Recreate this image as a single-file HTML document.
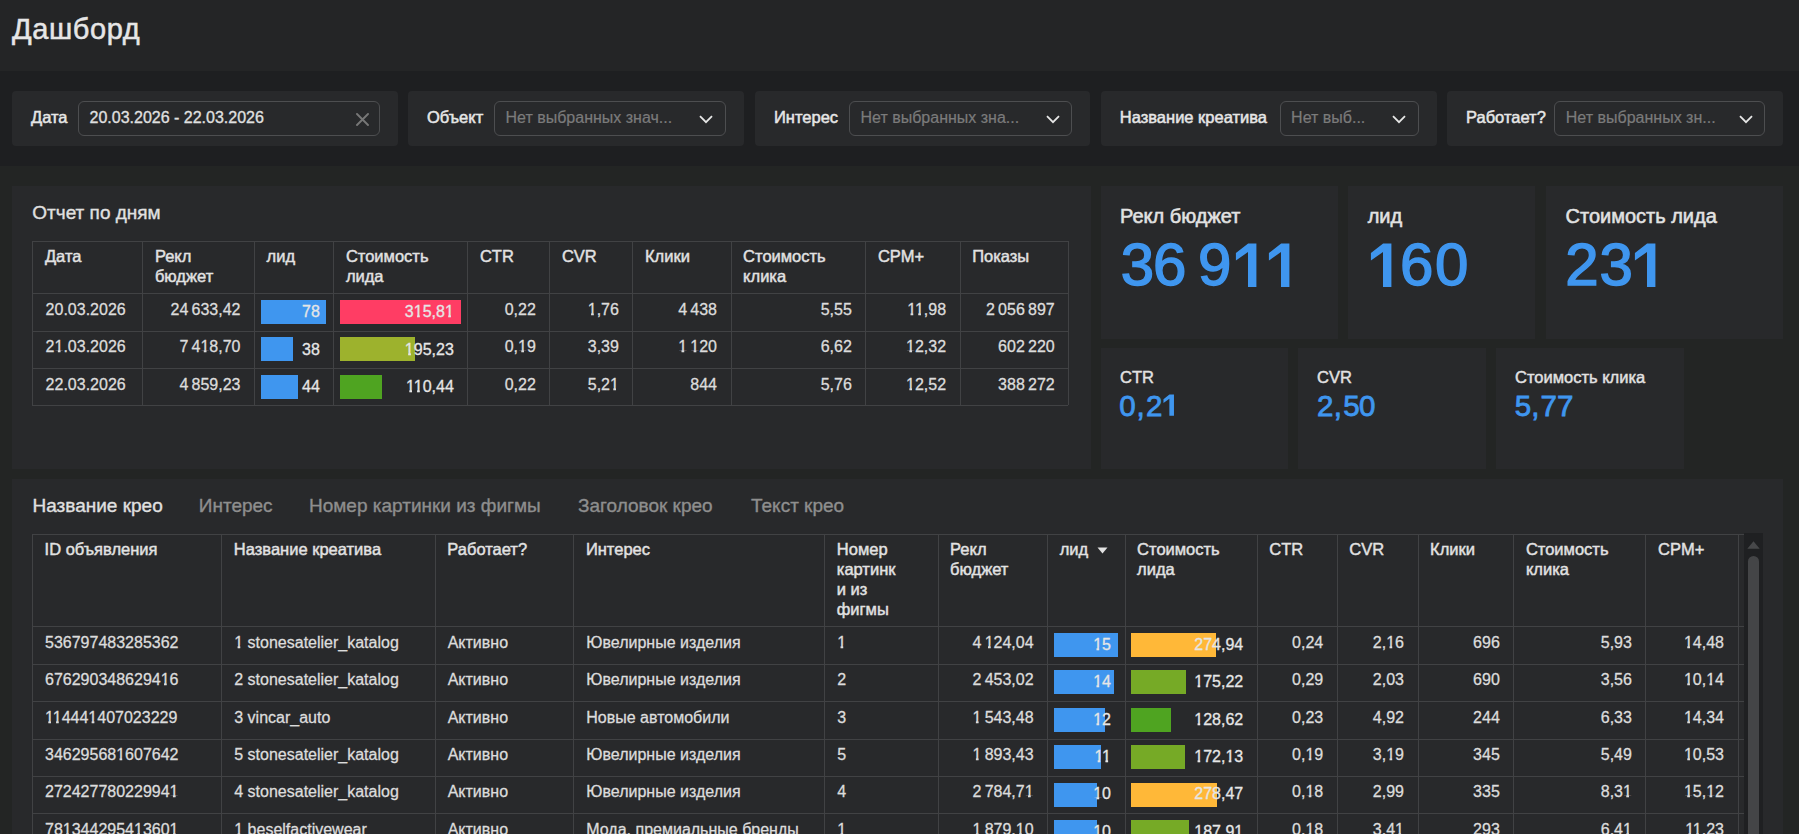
<!DOCTYPE html>
<html><head><meta charset="utf-8"><title>Дашборд</title>
<style>
html,body{margin:0;padding:0;}
html .o{clip-path:polygon(0 0,100% 0,100% 0.74em,0.375em 0.74em,0.375em 100%,0.21em 100%,0.21em 0.74em,0 0.74em);}
body{width:1799px;height:834px;overflow:hidden;position:relative;background:#232524;font-family:"Liberation Sans", sans-serif;}
</style></head><body>
<div style="position:absolute;left:0px;top:0px;width:1799px;height:71px;background:#242526;"></div>
<div style="position:absolute;left:0px;top:71px;width:1799px;height:95px;background:#1e1f21;"></div>
<div style="position:absolute;top:10.93px;font-size:29px;line-height:36.25px;font-weight:400;color:#e6e6e6;white-space:nowrap;letter-spacing:0.6px;left:12px;-webkit-text-stroke:0.5px #e6e6e6;">Дашборд</div>
<div style="position:absolute;left:12px;top:91px;width:385.6px;height:55px;background:#28292b;border-radius:4px;"></div>
<div style="position:absolute;top:107.27px;font-size:16.5px;line-height:20.62px;font-weight:400;color:#e6e6e6;white-space:nowrap;left:31px;-webkit-text-stroke:0.5px #e6e6e6;">Дата</div>
<div style="position:absolute;left:78px;top:101.2px;width:300px;height:32.6px;border:1px solid #4d4e50;border-radius:6px;"></div>
<div style="position:absolute;top:108.16px;font-size:16px;line-height:20.0px;font-weight:400;color:#e0e0e0;white-space:nowrap;left:89.5px;-webkit-text-stroke:0.3px #e0e0e0;">20.03.2026 - 22.03.2026</div>
<svg style="position:absolute;left:355.5px;top:112.5px" width="13" height="13" viewBox="0 0 13 13"><path d="M1 1L12 12M12 1L1 12" stroke="#777" stroke-width="1.9" stroke-linecap="round" fill="none"/></svg>
<div style="position:absolute;left:408.4px;top:91px;width:335.5px;height:55px;background:#28292b;border-radius:4px;"></div>
<div style="position:absolute;top:107.27px;font-size:16.5px;line-height:20.62px;font-weight:400;color:#e6e6e6;white-space:nowrap;left:427px;-webkit-text-stroke:0.5px #e6e6e6;">Объект</div>
<div style="position:absolute;left:494px;top:101.2px;width:229.7px;height:32.6px;border:1px solid #4d4e50;border-radius:6px;"></div>
<div style="position:absolute;top:108.06px;font-size:16px;line-height:20.0px;font-weight:400;color:#7b7b7b;white-space:nowrap;left:505.5px;-webkit-text-stroke:0.2px #7b7b7b;">Нет выбранных знач...</div>
<svg style="position:absolute;left:699.2px;top:114.5px" width="14" height="9" viewBox="0 0 14 9"><path d="M1 1.2L7 7.2L13 1.2" stroke="#e6e6e6" stroke-width="1.8" fill="none"/></svg>
<div style="position:absolute;left:755px;top:91px;width:335px;height:55px;background:#28292b;border-radius:4px;"></div>
<div style="position:absolute;top:107.27px;font-size:16.5px;line-height:20.62px;font-weight:400;color:#e6e6e6;white-space:nowrap;left:774px;-webkit-text-stroke:0.5px #e6e6e6;">Интерес</div>
<div style="position:absolute;left:849px;top:101.2px;width:221px;height:32.6px;border:1px solid #4d4e50;border-radius:6px;"></div>
<div style="position:absolute;top:108.06px;font-size:16px;line-height:20.0px;font-weight:400;color:#7b7b7b;white-space:nowrap;left:860.5px;-webkit-text-stroke:0.2px #7b7b7b;">Нет выбранных зна...</div>
<svg style="position:absolute;left:1045.5px;top:114.5px" width="14" height="9" viewBox="0 0 14 9"><path d="M1 1.2L7 7.2L13 1.2" stroke="#e6e6e6" stroke-width="1.8" fill="none"/></svg>
<div style="position:absolute;left:1101.3px;top:91px;width:335.4px;height:55px;background:#28292b;border-radius:4px;"></div>
<div style="position:absolute;top:107.27px;font-size:16.5px;line-height:20.62px;font-weight:400;color:#e6e6e6;white-space:nowrap;left:1119.8px;-webkit-text-stroke:0.5px #e6e6e6;">Название креатива</div>
<div style="position:absolute;left:1279.6px;top:101.2px;width:137.0px;height:32.6px;border:1px solid #4d4e50;border-radius:6px;"></div>
<div style="position:absolute;top:108.06px;font-size:16px;line-height:20.0px;font-weight:400;color:#7b7b7b;white-space:nowrap;left:1291.1px;-webkit-text-stroke:0.2px #7b7b7b;">Нет выб...</div>
<svg style="position:absolute;left:1392.1px;top:114.5px" width="14" height="9" viewBox="0 0 14 9"><path d="M1 1.2L7 7.2L13 1.2" stroke="#e6e6e6" stroke-width="1.8" fill="none"/></svg>
<div style="position:absolute;left:1447.3px;top:91px;width:335.7px;height:55px;background:#28292b;border-radius:4px;"></div>
<div style="position:absolute;top:107.27px;font-size:16.5px;line-height:20.62px;font-weight:400;color:#e6e6e6;white-space:nowrap;left:1466px;-webkit-text-stroke:0.5px #e6e6e6;">Работает?</div>
<div style="position:absolute;left:1554.3px;top:101.2px;width:208.7px;height:32.6px;border:1px solid #4d4e50;border-radius:6px;"></div>
<div style="position:absolute;top:108.06px;font-size:16px;line-height:20.0px;font-weight:400;color:#7b7b7b;white-space:nowrap;left:1565.8px;-webkit-text-stroke:0.2px #7b7b7b;">Нет выбранных зн...</div>
<svg style="position:absolute;left:1738.5px;top:114.5px" width="14" height="9" viewBox="0 0 14 9"><path d="M1 1.2L7 7.2L13 1.2" stroke="#e6e6e6" stroke-width="1.8" fill="none"/></svg>
<div style="position:absolute;left:12px;top:186px;width:1079.4px;height:282.8px;background:#28292b;"></div>
<div style="position:absolute;top:200.84px;font-size:19px;line-height:23.75px;font-weight:400;color:#e0e0e0;white-space:nowrap;left:32.3px;-webkit-text-stroke:0.35px #e0e0e0;">Отчет по дням</div>
<div style="position:absolute;left:1100.5px;top:185.6px;width:237.8px;height:153.2px;background:#28292b;"></div>
<div style="position:absolute;top:204.37px;font-size:20px;line-height:25.0px;font-weight:400;color:#e2e2e2;white-space:nowrap;left:1120.0px;-webkit-text-stroke:0.55px #e2e2e2;">Рекл бюджет</div>
<div style="position:absolute;left:1348.2px;top:185.6px;width:187.2px;height:153.2px;background:#28292b;"></div>
<div style="position:absolute;top:204.37px;font-size:20px;line-height:25.0px;font-weight:400;color:#e2e2e2;white-space:nowrap;left:1367.7px;-webkit-text-stroke:0.55px #e2e2e2;">лид</div>
<div style="position:absolute;left:1546px;top:185.6px;width:237.3px;height:153.2px;background:#28292b;"></div>
<div style="position:absolute;top:204.37px;font-size:20px;line-height:25.0px;font-weight:400;color:#e2e2e2;white-space:nowrap;left:1565.5px;-webkit-text-stroke:0.55px #e2e2e2;">Стоимость лида</div>
<div style="position:absolute;left:1101px;top:348px;width:187px;height:120.5px;background:#28292b;"></div>
<div style="position:absolute;top:366.97px;font-size:16.5px;line-height:20.62px;font-weight:400;color:#e2e2e2;white-space:nowrap;left:1120px;-webkit-text-stroke:0.45px #e2e2e2;">CTR</div>
<div style="position:absolute;left:1298px;top:348px;width:188px;height:120.5px;background:#28292b;"></div>
<div style="position:absolute;top:366.97px;font-size:16.5px;line-height:20.62px;font-weight:400;color:#e2e2e2;white-space:nowrap;left:1317px;-webkit-text-stroke:0.45px #e2e2e2;">CVR</div>
<div style="position:absolute;left:1496px;top:348px;width:188px;height:120.5px;background:#28292b;"></div>
<div style="position:absolute;top:366.97px;font-size:16.5px;line-height:20.62px;font-weight:400;color:#e2e2e2;white-space:nowrap;left:1515px;-webkit-text-stroke:0.45px #e2e2e2;">Стоимость клика</div>
<div style="position:absolute;left:1120.8px;top:225.3px;font-size:60px;line-height:80px;color:#3f96ef;-webkit-text-stroke:1.5px #3f96ef;">3</div>
<div style="position:absolute;left:1153px;top:225.3px;font-size:60px;line-height:80px;color:#3f96ef;-webkit-text-stroke:1.5px #3f96ef;">6</div>
<div style="position:absolute;left:1198px;top:225.3px;font-size:60px;line-height:80px;color:#3f96ef;-webkit-text-stroke:1.5px #3f96ef;">9</div>
<div style="position:absolute;left:1400.1px;top:225.3px;font-size:60px;line-height:80px;color:#3f96ef;-webkit-text-stroke:1.5px #3f96ef;">6</div>
<div style="position:absolute;left:1434.9px;top:225.3px;font-size:60px;line-height:80px;color:#3f96ef;-webkit-text-stroke:1.5px #3f96ef;">0</div>
<div style="position:absolute;left:1565.2px;top:225.3px;font-size:60px;line-height:80px;color:#3f96ef;-webkit-text-stroke:1.5px #3f96ef;">2</div>
<div style="position:absolute;left:1599.6px;top:225.3px;font-size:60px;line-height:80px;color:#3f96ef;-webkit-text-stroke:1.5px #3f96ef;">3</div>
<svg style="position:absolute;left:1234.9px;top:243.3px" width="37.4" height="45.4"><polygon points="0.91,10.07 13.14,0.5 21.4,0.5 21.4,43.9 13.0,43.9 13.0,8.99 0.91,17.62" fill="#3f96ef"/></svg>
<svg style="position:absolute;left:1267.6px;top:243.3px" width="37.4" height="45.4"><polygon points="0.91,10.07 13.14,0.5 21.4,0.5 21.4,43.9 13.0,43.9 13.0,8.99 0.91,17.62" fill="#3f96ef"/></svg>
<svg style="position:absolute;left:1369.9px;top:243.3px" width="37.4" height="45.4"><polygon points="0.91,10.07 13.14,0.5 21.4,0.5 21.4,43.9 13.0,43.9 13.0,8.99 0.91,17.62" fill="#3f96ef"/></svg>
<svg style="position:absolute;left:1634.4px;top:243.3px" width="37.4" height="45.4"><polygon points="0.91,10.07 13.14,0.5 21.4,0.5 21.4,43.9 13.0,43.9 13.0,8.99 0.91,17.62" fill="#3f96ef"/></svg>
<div style="position:absolute;left:1119.2px;top:385.9px;font-size:29.5px;line-height:40px;color:#3f96ef;-webkit-text-stroke:0.8px #3f96ef;">0</div>
<div style="position:absolute;left:1136.5px;top:385.9px;font-size:29.5px;line-height:40px;color:#3f96ef;-webkit-text-stroke:0.8px #3f96ef;">,</div>
<div style="position:absolute;left:1145.9px;top:385.9px;font-size:29.5px;line-height:40px;color:#3f96ef;-webkit-text-stroke:0.8px #3f96ef;">2</div>
<div style="position:absolute;left:1317px;top:385.9px;font-size:29.5px;line-height:40px;color:#3f96ef;-webkit-text-stroke:0.8px #3f96ef;">2</div>
<div style="position:absolute;left:1333.8px;top:385.9px;font-size:29.5px;line-height:40px;color:#3f96ef;-webkit-text-stroke:0.8px #3f96ef;">,</div>
<div style="position:absolute;left:1343.2px;top:385.9px;font-size:29.5px;line-height:40px;color:#3f96ef;-webkit-text-stroke:0.8px #3f96ef;">5</div>
<div style="position:absolute;left:1359.1px;top:385.9px;font-size:29.5px;line-height:40px;color:#3f96ef;-webkit-text-stroke:0.8px #3f96ef;">0</div>
<div style="position:absolute;left:1514.8px;top:385.9px;font-size:29.5px;line-height:40px;color:#3f96ef;-webkit-text-stroke:0.8px #3f96ef;">5</div>
<div style="position:absolute;left:1531.2px;top:385.9px;font-size:29.5px;line-height:40px;color:#3f96ef;-webkit-text-stroke:0.8px #3f96ef;">,</div>
<div style="position:absolute;left:1540.6px;top:385.9px;font-size:29.5px;line-height:40px;color:#3f96ef;-webkit-text-stroke:0.8px #3f96ef;">7</div>
<div style="position:absolute;left:1557.1px;top:385.9px;font-size:29.5px;line-height:40px;color:#3f96ef;-webkit-text-stroke:0.8px #3f96ef;">7</div>
<svg style="position:absolute;left:1163.23px;top:394.3px" width="19.32" height="23.27"><polygon points="0.45,5.19 6.44,0.5 10.97,0.5 10.97,21.77 6.37,21.77 6.37,4.66 0.45,8.89" fill="#3f96ef"/></svg>
<div style="position:absolute;left:12px;top:478.6px;width:1771.3px;height:400px;background:#28292b;"></div>
<div style="position:absolute;top:493.74px;font-size:19px;line-height:23.75px;font-weight:400;color:#e0e0e0;white-space:nowrap;left:32.5px;-webkit-text-stroke:0.35px #e0e0e0;">Название крео</div>
<div style="position:absolute;top:493.74px;font-size:19px;line-height:23.75px;font-weight:400;color:#8e8e8e;white-space:nowrap;left:198.75px;-webkit-text-stroke:0.35px #8e8e8e;">Интерес</div>
<div style="position:absolute;top:493.74px;font-size:19px;line-height:23.75px;font-weight:400;color:#8e8e8e;white-space:nowrap;left:309px;-webkit-text-stroke:0.35px #8e8e8e;">Номер картинки из фигмы</div>
<div style="position:absolute;top:493.74px;font-size:19px;line-height:23.75px;font-weight:400;color:#8e8e8e;white-space:nowrap;left:578px;-webkit-text-stroke:0.35px #8e8e8e;">Заголовок крео</div>
<div style="position:absolute;top:493.74px;font-size:19px;line-height:23.75px;font-weight:400;color:#8e8e8e;white-space:nowrap;left:751px;-webkit-text-stroke:0.35px #8e8e8e;">Текст крео</div>
<div style="position:absolute;left:32.3px;top:241px;width:1035.9px;height:1px;background:#414244;"></div>
<div style="position:absolute;left:32.3px;top:241px;width:1px;height:164.2px;background:#414244;"></div>
<div style="position:absolute;left:142.3px;top:241px;width:1px;height:164.2px;background:#414244;"></div>
<div style="position:absolute;left:254px;top:241px;width:1px;height:164.2px;background:#414244;"></div>
<div style="position:absolute;left:333.3px;top:241px;width:1px;height:164.2px;background:#414244;"></div>
<div style="position:absolute;left:467.3px;top:241px;width:1px;height:164.2px;background:#414244;"></div>
<div style="position:absolute;left:549.3px;top:241px;width:1px;height:164.2px;background:#414244;"></div>
<div style="position:absolute;left:632.4px;top:241px;width:1px;height:164.2px;background:#414244;"></div>
<div style="position:absolute;left:730.5px;top:241px;width:1px;height:164.2px;background:#414244;"></div>
<div style="position:absolute;left:865.3px;top:241px;width:1px;height:164.2px;background:#414244;"></div>
<div style="position:absolute;left:959.6px;top:241px;width:1px;height:164.2px;background:#414244;"></div>
<div style="position:absolute;left:1068.2px;top:241px;width:1px;height:164.2px;background:#414244;"></div>
<div style="position:absolute;left:32.3px;top:293.3px;width:1035.9px;height:1px;background:#414244;"></div>
<div style="position:absolute;left:32.3px;top:330.6px;width:1035.9px;height:1px;background:#414244;"></div>
<div style="position:absolute;left:32.3px;top:367.9px;width:1035.9px;height:1px;background:#414244;"></div>
<div style="position:absolute;left:32.3px;top:405.2px;width:1035.9px;height:1px;background:#414244;"></div>
<div style="position:absolute;top:245.97px;font-size:16.5px;line-height:20.62px;font-weight:400;color:#e2e2e2;white-space:nowrap;left:44.9px;-webkit-text-stroke:0.45px #e2e2e2;">Дата</div>
<div style="position:absolute;top:245.97px;font-size:16.5px;line-height:20.62px;font-weight:400;color:#e2e2e2;white-space:nowrap;left:154.9px;-webkit-text-stroke:0.45px #e2e2e2;">Рекл</div>
<div style="position:absolute;top:265.77px;font-size:16.5px;line-height:20.62px;font-weight:400;color:#e2e2e2;white-space:nowrap;left:154.9px;-webkit-text-stroke:0.45px #e2e2e2;">бюджет</div>
<div style="position:absolute;top:245.97px;font-size:16.5px;line-height:20.62px;font-weight:400;color:#e2e2e2;white-space:nowrap;left:266.6px;-webkit-text-stroke:0.45px #e2e2e2;">лид</div>
<div style="position:absolute;top:245.97px;font-size:16.5px;line-height:20.62px;font-weight:400;color:#e2e2e2;white-space:nowrap;left:345.90000000000003px;-webkit-text-stroke:0.45px #e2e2e2;">Стоимость</div>
<div style="position:absolute;top:265.77px;font-size:16.5px;line-height:20.62px;font-weight:400;color:#e2e2e2;white-space:nowrap;left:345.90000000000003px;-webkit-text-stroke:0.45px #e2e2e2;">лида</div>
<div style="position:absolute;top:245.97px;font-size:16.5px;line-height:20.62px;font-weight:400;color:#e2e2e2;white-space:nowrap;left:479.90000000000003px;-webkit-text-stroke:0.45px #e2e2e2;">CTR</div>
<div style="position:absolute;top:245.97px;font-size:16.5px;line-height:20.62px;font-weight:400;color:#e2e2e2;white-space:nowrap;left:561.9px;-webkit-text-stroke:0.45px #e2e2e2;">CVR</div>
<div style="position:absolute;top:245.97px;font-size:16.5px;line-height:20.62px;font-weight:400;color:#e2e2e2;white-space:nowrap;left:645.0px;-webkit-text-stroke:0.45px #e2e2e2;">Клики</div>
<div style="position:absolute;top:245.97px;font-size:16.5px;line-height:20.62px;font-weight:400;color:#e2e2e2;white-space:nowrap;left:743.1px;-webkit-text-stroke:0.45px #e2e2e2;">Стоимость</div>
<div style="position:absolute;top:265.77px;font-size:16.5px;line-height:20.62px;font-weight:400;color:#e2e2e2;white-space:nowrap;left:743.1px;-webkit-text-stroke:0.45px #e2e2e2;">клика</div>
<div style="position:absolute;top:245.97px;font-size:16.5px;line-height:20.62px;font-weight:400;color:#e2e2e2;white-space:nowrap;left:877.9px;-webkit-text-stroke:0.45px #e2e2e2;">CPM+</div>
<div style="position:absolute;top:245.97px;font-size:16.5px;line-height:20.62px;font-weight:400;color:#e2e2e2;white-space:nowrap;left:972.2px;-webkit-text-stroke:0.45px #e2e2e2;">Показы</div>
<div style="position:absolute;top:300.06px;font-size:16px;line-height:20.0px;font-weight:400;color:#dcdcdc;white-space:nowrap;left:45.599999999999994px;-webkit-text-stroke:0.3px #dcdcdc;">20.03.2026</div>
<div style="position:absolute;top:300.06px;font-size:16px;line-height:20.0px;font-weight:400;color:#dcdcdc;white-space:nowrap;left:-159.5px;width:400px;text-align:right;-webkit-text-stroke:0.3px #dcdcdc;">24 633,42</div>
<div style="position:absolute;left:260.9px;top:300.0px;width:65.1px;height:24px;background:#3f96ef;"></div>
<div style="position:absolute;top:302.26px;font-size:16px;line-height:20.0px;font-weight:400;color:#e6e6e6;white-space:nowrap;left:-80.2px;width:400px;text-align:right;-webkit-text-stroke:0.3px #e6e6e6;">78</div>
<div style="position:absolute;left:340.2px;top:300.0px;width:120.9px;height:24px;background:#ff3d64;"></div>
<div style="position:absolute;top:302.26px;font-size:16px;line-height:20.0px;font-weight:400;color:#e6e6e6;white-space:nowrap;left:53.8px;width:400px;text-align:right;-webkit-text-stroke:0.3px #e6e6e6;">3<span class="o">1</span>5,8<span class="o">1</span></div>
<div style="position:absolute;top:300.06px;font-size:16px;line-height:20.0px;font-weight:400;color:#dcdcdc;white-space:nowrap;left:135.8px;width:400px;text-align:right;-webkit-text-stroke:0.3px #dcdcdc;">0,22</div>
<div style="position:absolute;top:300.06px;font-size:16px;line-height:20.0px;font-weight:400;color:#dcdcdc;white-space:nowrap;left:218.9px;width:400px;text-align:right;-webkit-text-stroke:0.3px #dcdcdc;"><span class="o">1</span>,76</div>
<div style="position:absolute;top:300.06px;font-size:16px;line-height:20.0px;font-weight:400;color:#dcdcdc;white-space:nowrap;left:317.0px;width:400px;text-align:right;-webkit-text-stroke:0.3px #dcdcdc;">4 438</div>
<div style="position:absolute;top:300.06px;font-size:16px;line-height:20.0px;font-weight:400;color:#dcdcdc;white-space:nowrap;left:451.8px;width:400px;text-align:right;-webkit-text-stroke:0.3px #dcdcdc;">5,55</div>
<div style="position:absolute;top:300.06px;font-size:16px;line-height:20.0px;font-weight:400;color:#dcdcdc;white-space:nowrap;left:546.1px;width:400px;text-align:right;-webkit-text-stroke:0.3px #dcdcdc;"><span class="o">1</span><span class="o">1</span>,98</div>
<div style="position:absolute;top:300.06px;font-size:16px;line-height:20.0px;font-weight:400;color:#dcdcdc;white-space:nowrap;left:654.7px;width:400px;text-align:right;-webkit-text-stroke:0.3px #dcdcdc;">2 056 897</div>
<div style="position:absolute;top:337.36px;font-size:16px;line-height:20.0px;font-weight:400;color:#dcdcdc;white-space:nowrap;left:45.599999999999994px;-webkit-text-stroke:0.3px #dcdcdc;">2<span class="o">1</span>.03.2026</div>
<div style="position:absolute;top:337.36px;font-size:16px;line-height:20.0px;font-weight:400;color:#dcdcdc;white-space:nowrap;left:-159.5px;width:400px;text-align:right;-webkit-text-stroke:0.3px #dcdcdc;">7 4<span class="o">1</span>8,70</div>
<div style="position:absolute;left:260.9px;top:337.3px;width:32.2px;height:24px;background:#3f96ef;"></div>
<div style="position:absolute;top:339.56px;font-size:16px;line-height:20.0px;font-weight:400;color:#e6e6e6;white-space:nowrap;left:-80.2px;width:400px;text-align:right;-webkit-text-stroke:0.3px #e6e6e6;">38</div>
<div style="position:absolute;left:340.2px;top:337.3px;width:74.9px;height:24px;background:#9db22d;"></div>
<div style="position:absolute;top:339.56px;font-size:16px;line-height:20.0px;font-weight:400;color:#e6e6e6;white-space:nowrap;left:53.8px;width:400px;text-align:right;-webkit-text-stroke:0.3px #e6e6e6;"><span class="o">1</span>95,23</div>
<div style="position:absolute;top:337.36px;font-size:16px;line-height:20.0px;font-weight:400;color:#dcdcdc;white-space:nowrap;left:135.8px;width:400px;text-align:right;-webkit-text-stroke:0.3px #dcdcdc;">0,<span class="o">1</span>9</div>
<div style="position:absolute;top:337.36px;font-size:16px;line-height:20.0px;font-weight:400;color:#dcdcdc;white-space:nowrap;left:218.9px;width:400px;text-align:right;-webkit-text-stroke:0.3px #dcdcdc;">3,39</div>
<div style="position:absolute;top:337.36px;font-size:16px;line-height:20.0px;font-weight:400;color:#dcdcdc;white-space:nowrap;left:317.0px;width:400px;text-align:right;-webkit-text-stroke:0.3px #dcdcdc;"><span class="o">1</span> <span class="o">1</span>20</div>
<div style="position:absolute;top:337.36px;font-size:16px;line-height:20.0px;font-weight:400;color:#dcdcdc;white-space:nowrap;left:451.8px;width:400px;text-align:right;-webkit-text-stroke:0.3px #dcdcdc;">6,62</div>
<div style="position:absolute;top:337.36px;font-size:16px;line-height:20.0px;font-weight:400;color:#dcdcdc;white-space:nowrap;left:546.1px;width:400px;text-align:right;-webkit-text-stroke:0.3px #dcdcdc;"><span class="o">1</span>2,32</div>
<div style="position:absolute;top:337.36px;font-size:16px;line-height:20.0px;font-weight:400;color:#dcdcdc;white-space:nowrap;left:654.7px;width:400px;text-align:right;-webkit-text-stroke:0.3px #dcdcdc;">602 220</div>
<div style="position:absolute;top:374.66px;font-size:16px;line-height:20.0px;font-weight:400;color:#dcdcdc;white-space:nowrap;left:45.599999999999994px;-webkit-text-stroke:0.3px #dcdcdc;">22.03.2026</div>
<div style="position:absolute;top:374.66px;font-size:16px;line-height:20.0px;font-weight:400;color:#dcdcdc;white-space:nowrap;left:-159.5px;width:400px;text-align:right;-webkit-text-stroke:0.3px #dcdcdc;">4 859,23</div>
<div style="position:absolute;left:260.9px;top:374.6px;width:37.1px;height:24px;background:#3f96ef;"></div>
<div style="position:absolute;top:376.86px;font-size:16px;line-height:20.0px;font-weight:400;color:#e6e6e6;white-space:nowrap;left:-80.2px;width:400px;text-align:right;-webkit-text-stroke:0.3px #e6e6e6;">44</div>
<div style="position:absolute;left:340.2px;top:374.6px;width:41.8px;height:24px;background:#4fa421;"></div>
<div style="position:absolute;top:376.86px;font-size:16px;line-height:20.0px;font-weight:400;color:#e6e6e6;white-space:nowrap;left:53.8px;width:400px;text-align:right;-webkit-text-stroke:0.3px #e6e6e6;"><span class="o">1</span><span class="o">1</span>0,44</div>
<div style="position:absolute;top:374.66px;font-size:16px;line-height:20.0px;font-weight:400;color:#dcdcdc;white-space:nowrap;left:135.8px;width:400px;text-align:right;-webkit-text-stroke:0.3px #dcdcdc;">0,22</div>
<div style="position:absolute;top:374.66px;font-size:16px;line-height:20.0px;font-weight:400;color:#dcdcdc;white-space:nowrap;left:218.9px;width:400px;text-align:right;-webkit-text-stroke:0.3px #dcdcdc;">5,2<span class="o">1</span></div>
<div style="position:absolute;top:374.66px;font-size:16px;line-height:20.0px;font-weight:400;color:#dcdcdc;white-space:nowrap;left:317.0px;width:400px;text-align:right;-webkit-text-stroke:0.3px #dcdcdc;">844</div>
<div style="position:absolute;top:374.66px;font-size:16px;line-height:20.0px;font-weight:400;color:#dcdcdc;white-space:nowrap;left:451.8px;width:400px;text-align:right;-webkit-text-stroke:0.3px #dcdcdc;">5,76</div>
<div style="position:absolute;top:374.66px;font-size:16px;line-height:20.0px;font-weight:400;color:#dcdcdc;white-space:nowrap;left:546.1px;width:400px;text-align:right;-webkit-text-stroke:0.3px #dcdcdc;"><span class="o">1</span>2,52</div>
<div style="position:absolute;top:374.66px;font-size:16px;line-height:20.0px;font-weight:400;color:#dcdcdc;white-space:nowrap;left:654.7px;width:400px;text-align:right;-webkit-text-stroke:0.3px #dcdcdc;">388 272</div>
<div style="position:absolute;left:32px;top:534.3px;width:1712px;height:1px;background:#414244;"></div>
<div style="position:absolute;left:32px;top:534.3px;width:1px;height:365.7px;background:#414244;"></div>
<div style="position:absolute;left:221.25px;top:534.3px;width:1px;height:365.7px;background:#414244;"></div>
<div style="position:absolute;left:434.7px;top:534.3px;width:1px;height:365.7px;background:#414244;"></div>
<div style="position:absolute;left:573.3px;top:534.3px;width:1px;height:365.7px;background:#414244;"></div>
<div style="position:absolute;left:824.2px;top:534.3px;width:1px;height:365.7px;background:#414244;"></div>
<div style="position:absolute;left:937.5px;top:534.3px;width:1px;height:365.7px;background:#414244;"></div>
<div style="position:absolute;left:1047.1px;top:534.3px;width:1px;height:365.7px;background:#414244;"></div>
<div style="position:absolute;left:1124.5px;top:534.3px;width:1px;height:365.7px;background:#414244;"></div>
<div style="position:absolute;left:1256.7px;top:534.3px;width:1px;height:365.7px;background:#414244;"></div>
<div style="position:absolute;left:1336.7px;top:534.3px;width:1px;height:365.7px;background:#414244;"></div>
<div style="position:absolute;left:1417.5px;top:534.3px;width:1px;height:365.7px;background:#414244;"></div>
<div style="position:absolute;left:1513.3px;top:534.3px;width:1px;height:365.7px;background:#414244;"></div>
<div style="position:absolute;left:1645.4px;top:534.3px;width:1px;height:365.7px;background:#414244;"></div>
<div style="position:absolute;left:1737.5px;top:534.3px;width:1px;height:365.7px;background:#414244;"></div>
<div style="position:absolute;left:32px;top:626.25px;width:1712px;height:1px;background:#414244;"></div>
<div style="position:absolute;left:32px;top:663.68px;width:1712px;height:1px;background:#414244;"></div>
<div style="position:absolute;left:32px;top:701.11px;width:1712px;height:1px;background:#414244;"></div>
<div style="position:absolute;left:32px;top:738.54px;width:1712px;height:1px;background:#414244;"></div>
<div style="position:absolute;left:32px;top:775.97px;width:1712px;height:1px;background:#414244;"></div>
<div style="position:absolute;left:32px;top:813.4px;width:1712px;height:1px;background:#414244;"></div>
<div style="position:absolute;top:538.97px;font-size:16.5px;line-height:20.62px;font-weight:400;color:#e2e2e2;white-space:nowrap;left:44.6px;-webkit-text-stroke:0.45px #e2e2e2;">ID объявления</div>
<div style="position:absolute;top:538.97px;font-size:16.5px;line-height:20.62px;font-weight:400;color:#e2e2e2;white-space:nowrap;left:233.85px;-webkit-text-stroke:0.45px #e2e2e2;">Название креатива</div>
<div style="position:absolute;top:538.97px;font-size:16.5px;line-height:20.62px;font-weight:400;color:#e2e2e2;white-space:nowrap;left:447.3px;-webkit-text-stroke:0.45px #e2e2e2;">Работает?</div>
<div style="position:absolute;top:538.97px;font-size:16.5px;line-height:20.62px;font-weight:400;color:#e2e2e2;white-space:nowrap;left:585.9px;-webkit-text-stroke:0.45px #e2e2e2;">Интерес</div>
<div style="position:absolute;top:538.97px;font-size:16.5px;line-height:20.62px;font-weight:400;color:#e2e2e2;white-space:nowrap;left:836.8000000000001px;-webkit-text-stroke:0.45px #e2e2e2;">Номер</div>
<div style="position:absolute;top:558.97px;font-size:16.5px;line-height:20.62px;font-weight:400;color:#e2e2e2;white-space:nowrap;left:836.8000000000001px;-webkit-text-stroke:0.45px #e2e2e2;">картинк</div>
<div style="position:absolute;top:578.97px;font-size:16.5px;line-height:20.62px;font-weight:400;color:#e2e2e2;white-space:nowrap;left:836.8000000000001px;-webkit-text-stroke:0.45px #e2e2e2;">и из</div>
<div style="position:absolute;top:598.97px;font-size:16.5px;line-height:20.62px;font-weight:400;color:#e2e2e2;white-space:nowrap;left:836.8000000000001px;-webkit-text-stroke:0.45px #e2e2e2;">фигмы</div>
<div style="position:absolute;top:538.97px;font-size:16.5px;line-height:20.62px;font-weight:400;color:#e2e2e2;white-space:nowrap;left:950.1px;-webkit-text-stroke:0.45px #e2e2e2;">Рекл</div>
<div style="position:absolute;top:558.97px;font-size:16.5px;line-height:20.62px;font-weight:400;color:#e2e2e2;white-space:nowrap;left:950.1px;-webkit-text-stroke:0.45px #e2e2e2;">бюджет</div>
<div style="position:absolute;top:538.97px;font-size:16.5px;line-height:20.62px;font-weight:400;color:#e2e2e2;white-space:nowrap;left:1059.6999999999998px;-webkit-text-stroke:0.45px #e2e2e2;">лид</div>
<div style="position:absolute;top:538.97px;font-size:16.5px;line-height:20.62px;font-weight:400;color:#e2e2e2;white-space:nowrap;left:1137.1px;-webkit-text-stroke:0.45px #e2e2e2;">Стоимость</div>
<div style="position:absolute;top:558.97px;font-size:16.5px;line-height:20.62px;font-weight:400;color:#e2e2e2;white-space:nowrap;left:1137.1px;-webkit-text-stroke:0.45px #e2e2e2;">лида</div>
<div style="position:absolute;top:538.97px;font-size:16.5px;line-height:20.62px;font-weight:400;color:#e2e2e2;white-space:nowrap;left:1269.3px;-webkit-text-stroke:0.45px #e2e2e2;">CTR</div>
<div style="position:absolute;top:538.97px;font-size:16.5px;line-height:20.62px;font-weight:400;color:#e2e2e2;white-space:nowrap;left:1349.3px;-webkit-text-stroke:0.45px #e2e2e2;">CVR</div>
<div style="position:absolute;top:538.97px;font-size:16.5px;line-height:20.62px;font-weight:400;color:#e2e2e2;white-space:nowrap;left:1430.1px;-webkit-text-stroke:0.45px #e2e2e2;">Клики</div>
<div style="position:absolute;top:538.97px;font-size:16.5px;line-height:20.62px;font-weight:400;color:#e2e2e2;white-space:nowrap;left:1525.8999999999999px;-webkit-text-stroke:0.45px #e2e2e2;">Стоимость</div>
<div style="position:absolute;top:558.97px;font-size:16.5px;line-height:20.62px;font-weight:400;color:#e2e2e2;white-space:nowrap;left:1525.8999999999999px;-webkit-text-stroke:0.45px #e2e2e2;">клика</div>
<div style="position:absolute;top:538.97px;font-size:16.5px;line-height:20.62px;font-weight:400;color:#e2e2e2;white-space:nowrap;left:1658.0px;-webkit-text-stroke:0.45px #e2e2e2;">CPM+</div>
<svg style="position:absolute;left:1096.8px;top:546.7px" width="11" height="7" viewBox="0 0 11 7"><path d="M0.5 0.5H10.5L5.5 6.5Z" fill="#e2e2e2"/></svg>
<div style="position:absolute;top:632.71px;font-size:16px;line-height:20.0px;font-weight:400;color:#dcdcdc;white-space:nowrap;left:45px;-webkit-text-stroke:0.3px #dcdcdc;">536797483285362</div>
<div style="position:absolute;top:632.71px;font-size:16px;line-height:20.0px;font-weight:400;color:#dcdcdc;white-space:nowrap;left:234.25px;-webkit-text-stroke:0.3px #dcdcdc;"><span class="o">1</span> stonesatelier_katalog</div>
<div style="position:absolute;top:632.71px;font-size:16px;line-height:20.0px;font-weight:400;color:#dcdcdc;white-space:nowrap;left:447.7px;-webkit-text-stroke:0.3px #dcdcdc;">Активно</div>
<div style="position:absolute;top:632.71px;font-size:16px;line-height:20.0px;font-weight:400;color:#dcdcdc;white-space:nowrap;left:586.3px;-webkit-text-stroke:0.3px #dcdcdc;">Ювелирные изделия</div>
<div style="position:absolute;top:632.71px;font-size:16px;line-height:20.0px;font-weight:400;color:#dcdcdc;white-space:nowrap;left:837.2px;-webkit-text-stroke:0.3px #dcdcdc;"><span class="o">1</span></div>
<div style="position:absolute;top:632.71px;font-size:16px;line-height:20.0px;font-weight:400;color:#dcdcdc;white-space:nowrap;left:633.6px;width:400px;text-align:right;-webkit-text-stroke:0.3px #dcdcdc;">4 <span class="o">1</span>24,04</div>
<div style="position:absolute;left:1054.0px;top:633.0px;width:63.6px;height:24px;background:#3f96ef;"></div>
<div style="position:absolute;top:634.71px;font-size:16px;line-height:20.0px;font-weight:400;color:#e6e6e6;white-space:nowrap;left:711.0px;width:400px;text-align:right;-webkit-text-stroke:0.3px #e6e6e6;"><span class="o">1</span>5</div>
<div style="position:absolute;left:1130.9px;top:633.0px;width:85.1px;height:24px;background:#ffb838;"></div>
<div style="position:absolute;top:634.71px;font-size:16px;line-height:20.0px;font-weight:400;color:#e6e6e6;white-space:nowrap;left:843.2px;width:400px;text-align:right;-webkit-text-stroke:0.3px #e6e6e6;">274,94</div>
<div style="position:absolute;top:632.71px;font-size:16px;line-height:20.0px;font-weight:400;color:#dcdcdc;white-space:nowrap;left:923.2px;width:400px;text-align:right;-webkit-text-stroke:0.3px #dcdcdc;">0,24</div>
<div style="position:absolute;top:632.71px;font-size:16px;line-height:20.0px;font-weight:400;color:#dcdcdc;white-space:nowrap;left:1004.0px;width:400px;text-align:right;-webkit-text-stroke:0.3px #dcdcdc;">2,<span class="o">1</span>6</div>
<div style="position:absolute;top:632.71px;font-size:16px;line-height:20.0px;font-weight:400;color:#dcdcdc;white-space:nowrap;left:1099.8px;width:400px;text-align:right;-webkit-text-stroke:0.3px #dcdcdc;">696</div>
<div style="position:absolute;top:632.71px;font-size:16px;line-height:20.0px;font-weight:400;color:#dcdcdc;white-space:nowrap;left:1231.9px;width:400px;text-align:right;-webkit-text-stroke:0.3px #dcdcdc;">5,93</div>
<div style="position:absolute;top:632.71px;font-size:16px;line-height:20.0px;font-weight:400;color:#dcdcdc;white-space:nowrap;left:1324.0px;width:400px;text-align:right;-webkit-text-stroke:0.3px #dcdcdc;"><span class="o">1</span>4,48</div>
<div style="position:absolute;top:670.14px;font-size:16px;line-height:20.0px;font-weight:400;color:#dcdcdc;white-space:nowrap;left:45px;-webkit-text-stroke:0.3px #dcdcdc;">6762903486294<span class="o">1</span>6</div>
<div style="position:absolute;top:670.14px;font-size:16px;line-height:20.0px;font-weight:400;color:#dcdcdc;white-space:nowrap;left:234.25px;-webkit-text-stroke:0.3px #dcdcdc;">2 stonesatelier_katalog</div>
<div style="position:absolute;top:670.14px;font-size:16px;line-height:20.0px;font-weight:400;color:#dcdcdc;white-space:nowrap;left:447.7px;-webkit-text-stroke:0.3px #dcdcdc;">Активно</div>
<div style="position:absolute;top:670.14px;font-size:16px;line-height:20.0px;font-weight:400;color:#dcdcdc;white-space:nowrap;left:586.3px;-webkit-text-stroke:0.3px #dcdcdc;">Ювелирные изделия</div>
<div style="position:absolute;top:670.14px;font-size:16px;line-height:20.0px;font-weight:400;color:#dcdcdc;white-space:nowrap;left:837.2px;-webkit-text-stroke:0.3px #dcdcdc;">2</div>
<div style="position:absolute;top:670.14px;font-size:16px;line-height:20.0px;font-weight:400;color:#dcdcdc;white-space:nowrap;left:633.6px;width:400px;text-align:right;-webkit-text-stroke:0.3px #dcdcdc;">2 453,02</div>
<div style="position:absolute;left:1054.0px;top:670.43px;width:60px;height:24px;background:#3f96ef;"></div>
<div style="position:absolute;top:672.14px;font-size:16px;line-height:20.0px;font-weight:400;color:#e6e6e6;white-space:nowrap;left:711.0px;width:400px;text-align:right;-webkit-text-stroke:0.3px #e6e6e6;"><span class="o">1</span>4</div>
<div style="position:absolute;left:1130.9px;top:670.43px;width:55.1px;height:24px;background:#76aa26;"></div>
<div style="position:absolute;top:672.14px;font-size:16px;line-height:20.0px;font-weight:400;color:#e6e6e6;white-space:nowrap;left:843.2px;width:400px;text-align:right;-webkit-text-stroke:0.3px #e6e6e6;"><span class="o">1</span>75,22</div>
<div style="position:absolute;top:670.14px;font-size:16px;line-height:20.0px;font-weight:400;color:#dcdcdc;white-space:nowrap;left:923.2px;width:400px;text-align:right;-webkit-text-stroke:0.3px #dcdcdc;">0,29</div>
<div style="position:absolute;top:670.14px;font-size:16px;line-height:20.0px;font-weight:400;color:#dcdcdc;white-space:nowrap;left:1004.0px;width:400px;text-align:right;-webkit-text-stroke:0.3px #dcdcdc;">2,03</div>
<div style="position:absolute;top:670.14px;font-size:16px;line-height:20.0px;font-weight:400;color:#dcdcdc;white-space:nowrap;left:1099.8px;width:400px;text-align:right;-webkit-text-stroke:0.3px #dcdcdc;">690</div>
<div style="position:absolute;top:670.14px;font-size:16px;line-height:20.0px;font-weight:400;color:#dcdcdc;white-space:nowrap;left:1231.9px;width:400px;text-align:right;-webkit-text-stroke:0.3px #dcdcdc;">3,56</div>
<div style="position:absolute;top:670.14px;font-size:16px;line-height:20.0px;font-weight:400;color:#dcdcdc;white-space:nowrap;left:1324.0px;width:400px;text-align:right;-webkit-text-stroke:0.3px #dcdcdc;"><span class="o">1</span>0,<span class="o">1</span>4</div>
<div style="position:absolute;top:707.57px;font-size:16px;line-height:20.0px;font-weight:400;color:#dcdcdc;white-space:nowrap;left:45px;-webkit-text-stroke:0.3px #dcdcdc;"><span class="o">1</span><span class="o">1</span>444<span class="o">1</span>407023229</div>
<div style="position:absolute;top:707.57px;font-size:16px;line-height:20.0px;font-weight:400;color:#dcdcdc;white-space:nowrap;left:234.25px;-webkit-text-stroke:0.3px #dcdcdc;">3 vincar_auto</div>
<div style="position:absolute;top:707.57px;font-size:16px;line-height:20.0px;font-weight:400;color:#dcdcdc;white-space:nowrap;left:447.7px;-webkit-text-stroke:0.3px #dcdcdc;">Активно</div>
<div style="position:absolute;top:707.57px;font-size:16px;line-height:20.0px;font-weight:400;color:#dcdcdc;white-space:nowrap;left:586.3px;-webkit-text-stroke:0.3px #dcdcdc;">Новые автомобили</div>
<div style="position:absolute;top:707.57px;font-size:16px;line-height:20.0px;font-weight:400;color:#dcdcdc;white-space:nowrap;left:837.2px;-webkit-text-stroke:0.3px #dcdcdc;">3</div>
<div style="position:absolute;top:707.57px;font-size:16px;line-height:20.0px;font-weight:400;color:#dcdcdc;white-space:nowrap;left:633.6px;width:400px;text-align:right;-webkit-text-stroke:0.3px #dcdcdc;"><span class="o">1</span> 543,48</div>
<div style="position:absolute;left:1054.0px;top:707.86px;width:51px;height:24px;background:#3f96ef;"></div>
<div style="position:absolute;top:709.57px;font-size:16px;line-height:20.0px;font-weight:400;color:#e6e6e6;white-space:nowrap;left:711.0px;width:400px;text-align:right;-webkit-text-stroke:0.3px #e6e6e6;"><span class="o">1</span>2</div>
<div style="position:absolute;left:1130.9px;top:707.86px;width:40.1px;height:24px;background:#4fa421;"></div>
<div style="position:absolute;top:709.57px;font-size:16px;line-height:20.0px;font-weight:400;color:#e6e6e6;white-space:nowrap;left:843.2px;width:400px;text-align:right;-webkit-text-stroke:0.3px #e6e6e6;"><span class="o">1</span>28,62</div>
<div style="position:absolute;top:707.57px;font-size:16px;line-height:20.0px;font-weight:400;color:#dcdcdc;white-space:nowrap;left:923.2px;width:400px;text-align:right;-webkit-text-stroke:0.3px #dcdcdc;">0,23</div>
<div style="position:absolute;top:707.57px;font-size:16px;line-height:20.0px;font-weight:400;color:#dcdcdc;white-space:nowrap;left:1004.0px;width:400px;text-align:right;-webkit-text-stroke:0.3px #dcdcdc;">4,92</div>
<div style="position:absolute;top:707.57px;font-size:16px;line-height:20.0px;font-weight:400;color:#dcdcdc;white-space:nowrap;left:1099.8px;width:400px;text-align:right;-webkit-text-stroke:0.3px #dcdcdc;">244</div>
<div style="position:absolute;top:707.57px;font-size:16px;line-height:20.0px;font-weight:400;color:#dcdcdc;white-space:nowrap;left:1231.9px;width:400px;text-align:right;-webkit-text-stroke:0.3px #dcdcdc;">6,33</div>
<div style="position:absolute;top:707.57px;font-size:16px;line-height:20.0px;font-weight:400;color:#dcdcdc;white-space:nowrap;left:1324.0px;width:400px;text-align:right;-webkit-text-stroke:0.3px #dcdcdc;"><span class="o">1</span>4,34</div>
<div style="position:absolute;top:745.0px;font-size:16px;line-height:20.0px;font-weight:400;color:#dcdcdc;white-space:nowrap;left:45px;-webkit-text-stroke:0.3px #dcdcdc;">34629568<span class="o">1</span>607642</div>
<div style="position:absolute;top:745.0px;font-size:16px;line-height:20.0px;font-weight:400;color:#dcdcdc;white-space:nowrap;left:234.25px;-webkit-text-stroke:0.3px #dcdcdc;">5 stonesatelier_katalog</div>
<div style="position:absolute;top:745.0px;font-size:16px;line-height:20.0px;font-weight:400;color:#dcdcdc;white-space:nowrap;left:447.7px;-webkit-text-stroke:0.3px #dcdcdc;">Активно</div>
<div style="position:absolute;top:745.0px;font-size:16px;line-height:20.0px;font-weight:400;color:#dcdcdc;white-space:nowrap;left:586.3px;-webkit-text-stroke:0.3px #dcdcdc;">Ювелирные изделия</div>
<div style="position:absolute;top:745.0px;font-size:16px;line-height:20.0px;font-weight:400;color:#dcdcdc;white-space:nowrap;left:837.2px;-webkit-text-stroke:0.3px #dcdcdc;">5</div>
<div style="position:absolute;top:745.0px;font-size:16px;line-height:20.0px;font-weight:400;color:#dcdcdc;white-space:nowrap;left:633.6px;width:400px;text-align:right;-webkit-text-stroke:0.3px #dcdcdc;"><span class="o">1</span> 893,43</div>
<div style="position:absolute;left:1054.0px;top:745.29px;width:46.9px;height:24px;background:#3f96ef;"></div>
<div style="position:absolute;top:747.0px;font-size:16px;line-height:20.0px;font-weight:400;color:#e6e6e6;white-space:nowrap;left:711.0px;width:400px;text-align:right;-webkit-text-stroke:0.3px #e6e6e6;"><span class="o">1</span><span class="o">1</span></div>
<div style="position:absolute;left:1130.9px;top:745.29px;width:54.1px;height:24px;background:#76aa26;"></div>
<div style="position:absolute;top:747.0px;font-size:16px;line-height:20.0px;font-weight:400;color:#e6e6e6;white-space:nowrap;left:843.2px;width:400px;text-align:right;-webkit-text-stroke:0.3px #e6e6e6;"><span class="o">1</span>72,<span class="o">1</span>3</div>
<div style="position:absolute;top:745.0px;font-size:16px;line-height:20.0px;font-weight:400;color:#dcdcdc;white-space:nowrap;left:923.2px;width:400px;text-align:right;-webkit-text-stroke:0.3px #dcdcdc;">0,<span class="o">1</span>9</div>
<div style="position:absolute;top:745.0px;font-size:16px;line-height:20.0px;font-weight:400;color:#dcdcdc;white-space:nowrap;left:1004.0px;width:400px;text-align:right;-webkit-text-stroke:0.3px #dcdcdc;">3,<span class="o">1</span>9</div>
<div style="position:absolute;top:745.0px;font-size:16px;line-height:20.0px;font-weight:400;color:#dcdcdc;white-space:nowrap;left:1099.8px;width:400px;text-align:right;-webkit-text-stroke:0.3px #dcdcdc;">345</div>
<div style="position:absolute;top:745.0px;font-size:16px;line-height:20.0px;font-weight:400;color:#dcdcdc;white-space:nowrap;left:1231.9px;width:400px;text-align:right;-webkit-text-stroke:0.3px #dcdcdc;">5,49</div>
<div style="position:absolute;top:745.0px;font-size:16px;line-height:20.0px;font-weight:400;color:#dcdcdc;white-space:nowrap;left:1324.0px;width:400px;text-align:right;-webkit-text-stroke:0.3px #dcdcdc;"><span class="o">1</span>0,53</div>
<div style="position:absolute;top:782.43px;font-size:16px;line-height:20.0px;font-weight:400;color:#dcdcdc;white-space:nowrap;left:45px;-webkit-text-stroke:0.3px #dcdcdc;">27242778022994<span class="o">1</span></div>
<div style="position:absolute;top:782.43px;font-size:16px;line-height:20.0px;font-weight:400;color:#dcdcdc;white-space:nowrap;left:234.25px;-webkit-text-stroke:0.3px #dcdcdc;">4 stonesatelier_katalog</div>
<div style="position:absolute;top:782.43px;font-size:16px;line-height:20.0px;font-weight:400;color:#dcdcdc;white-space:nowrap;left:447.7px;-webkit-text-stroke:0.3px #dcdcdc;">Активно</div>
<div style="position:absolute;top:782.43px;font-size:16px;line-height:20.0px;font-weight:400;color:#dcdcdc;white-space:nowrap;left:586.3px;-webkit-text-stroke:0.3px #dcdcdc;">Ювелирные изделия</div>
<div style="position:absolute;top:782.43px;font-size:16px;line-height:20.0px;font-weight:400;color:#dcdcdc;white-space:nowrap;left:837.2px;-webkit-text-stroke:0.3px #dcdcdc;">4</div>
<div style="position:absolute;top:782.43px;font-size:16px;line-height:20.0px;font-weight:400;color:#dcdcdc;white-space:nowrap;left:633.6px;width:400px;text-align:right;-webkit-text-stroke:0.3px #dcdcdc;">2 784,7<span class="o">1</span></div>
<div style="position:absolute;left:1054.0px;top:782.72px;width:42.9px;height:24px;background:#3f96ef;"></div>
<div style="position:absolute;top:784.43px;font-size:16px;line-height:20.0px;font-weight:400;color:#e6e6e6;white-space:nowrap;left:711.0px;width:400px;text-align:right;-webkit-text-stroke:0.3px #e6e6e6;"><span class="o">1</span>0</div>
<div style="position:absolute;left:1130.9px;top:782.72px;width:86.1px;height:24px;background:#ffb838;"></div>
<div style="position:absolute;top:784.43px;font-size:16px;line-height:20.0px;font-weight:400;color:#e6e6e6;white-space:nowrap;left:843.2px;width:400px;text-align:right;-webkit-text-stroke:0.3px #e6e6e6;">278,47</div>
<div style="position:absolute;top:782.43px;font-size:16px;line-height:20.0px;font-weight:400;color:#dcdcdc;white-space:nowrap;left:923.2px;width:400px;text-align:right;-webkit-text-stroke:0.3px #dcdcdc;">0,<span class="o">1</span>8</div>
<div style="position:absolute;top:782.43px;font-size:16px;line-height:20.0px;font-weight:400;color:#dcdcdc;white-space:nowrap;left:1004.0px;width:400px;text-align:right;-webkit-text-stroke:0.3px #dcdcdc;">2,99</div>
<div style="position:absolute;top:782.43px;font-size:16px;line-height:20.0px;font-weight:400;color:#dcdcdc;white-space:nowrap;left:1099.8px;width:400px;text-align:right;-webkit-text-stroke:0.3px #dcdcdc;">335</div>
<div style="position:absolute;top:782.43px;font-size:16px;line-height:20.0px;font-weight:400;color:#dcdcdc;white-space:nowrap;left:1231.9px;width:400px;text-align:right;-webkit-text-stroke:0.3px #dcdcdc;">8,3<span class="o">1</span></div>
<div style="position:absolute;top:782.43px;font-size:16px;line-height:20.0px;font-weight:400;color:#dcdcdc;white-space:nowrap;left:1324.0px;width:400px;text-align:right;-webkit-text-stroke:0.3px #dcdcdc;"><span class="o">1</span>5,<span class="o">1</span>2</div>
<div style="position:absolute;top:819.86px;font-size:16px;line-height:20.0px;font-weight:400;color:#dcdcdc;white-space:nowrap;left:45px;-webkit-text-stroke:0.3px #dcdcdc;">78<span class="o">1</span>3442954<span class="o">1</span>360<span class="o">1</span></div>
<div style="position:absolute;top:819.86px;font-size:16px;line-height:20.0px;font-weight:400;color:#dcdcdc;white-space:nowrap;left:234.25px;-webkit-text-stroke:0.3px #dcdcdc;"><span class="o">1</span> beselfactivewear</div>
<div style="position:absolute;top:819.86px;font-size:16px;line-height:20.0px;font-weight:400;color:#dcdcdc;white-space:nowrap;left:447.7px;-webkit-text-stroke:0.3px #dcdcdc;">Активно</div>
<div style="position:absolute;top:819.86px;font-size:16px;line-height:20.0px;font-weight:400;color:#dcdcdc;white-space:nowrap;left:586.3px;-webkit-text-stroke:0.3px #dcdcdc;">Мода, премиальные бренды</div>
<div style="position:absolute;top:819.86px;font-size:16px;line-height:20.0px;font-weight:400;color:#dcdcdc;white-space:nowrap;left:837.2px;-webkit-text-stroke:0.3px #dcdcdc;"><span class="o">1</span></div>
<div style="position:absolute;top:819.86px;font-size:16px;line-height:20.0px;font-weight:400;color:#dcdcdc;white-space:nowrap;left:633.6px;width:400px;text-align:right;-webkit-text-stroke:0.3px #dcdcdc;"><span class="o">1</span> 879,<span class="o">1</span>0</div>
<div style="position:absolute;left:1054.0px;top:820.15px;width:42.9px;height:24px;background:#3f96ef;"></div>
<div style="position:absolute;top:821.86px;font-size:16px;line-height:20.0px;font-weight:400;color:#e6e6e6;white-space:nowrap;left:711.0px;width:400px;text-align:right;-webkit-text-stroke:0.3px #e6e6e6;"><span class="o">1</span>0</div>
<div style="position:absolute;left:1130.9px;top:820.15px;width:58px;height:24px;background:#76aa26;"></div>
<div style="position:absolute;top:821.86px;font-size:16px;line-height:20.0px;font-weight:400;color:#e6e6e6;white-space:nowrap;left:843.2px;width:400px;text-align:right;-webkit-text-stroke:0.3px #e6e6e6;"><span class="o">1</span>87,9<span class="o">1</span></div>
<div style="position:absolute;top:819.86px;font-size:16px;line-height:20.0px;font-weight:400;color:#dcdcdc;white-space:nowrap;left:923.2px;width:400px;text-align:right;-webkit-text-stroke:0.3px #dcdcdc;">0,<span class="o">1</span>8</div>
<div style="position:absolute;top:819.86px;font-size:16px;line-height:20.0px;font-weight:400;color:#dcdcdc;white-space:nowrap;left:1004.0px;width:400px;text-align:right;-webkit-text-stroke:0.3px #dcdcdc;">3,4<span class="o">1</span></div>
<div style="position:absolute;top:819.86px;font-size:16px;line-height:20.0px;font-weight:400;color:#dcdcdc;white-space:nowrap;left:1099.8px;width:400px;text-align:right;-webkit-text-stroke:0.3px #dcdcdc;">293</div>
<div style="position:absolute;top:819.86px;font-size:16px;line-height:20.0px;font-weight:400;color:#dcdcdc;white-space:nowrap;left:1231.9px;width:400px;text-align:right;-webkit-text-stroke:0.3px #dcdcdc;">6,4<span class="o">1</span></div>
<div style="position:absolute;top:819.86px;font-size:16px;line-height:20.0px;font-weight:400;color:#dcdcdc;white-space:nowrap;left:1324.0px;width:400px;text-align:right;-webkit-text-stroke:0.3px #dcdcdc;"><span class="o">1</span><span class="o">1</span>,23</div>
<div style="position:absolute;left:1744.4px;top:533px;width:18.3px;height:400px;background:#1f2022;"></div>
<svg style="position:absolute;left:1747px;top:541px" width="13" height="8" viewBox="0 0 13 8"><path d="M6.5 0.3L12.7 7.8H0.3Z" fill="#47484a"/></svg>
<div style="position:absolute;left:1748px;top:556.3px;width:11px;height:400px;background:#444547;border-radius:5.5px;"></div>
</body></html>
